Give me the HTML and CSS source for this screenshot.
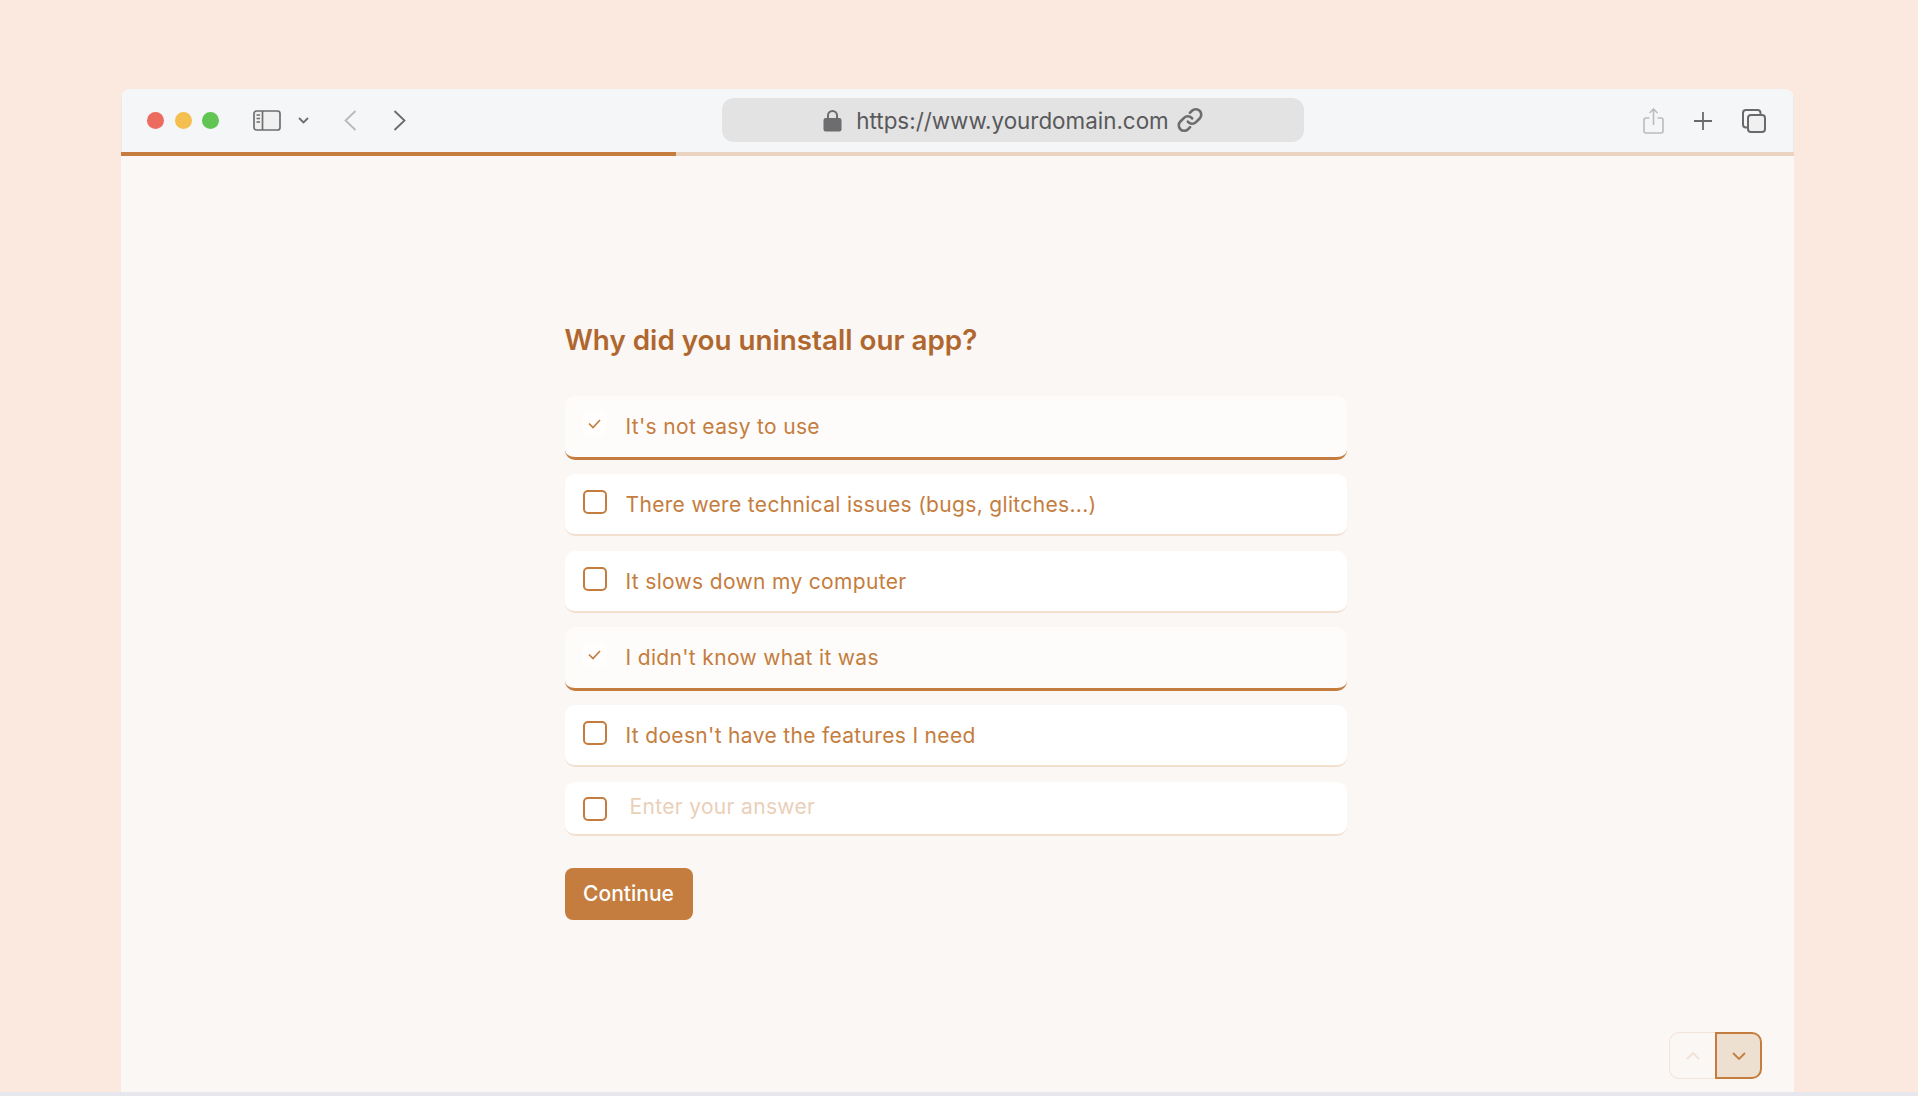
FILE: index.html
```html
<!DOCTYPE html>
<html lang="en">
<head>
<meta charset="utf-8">
<title>Why did you uninstall our app?</title>
<link rel="stylesheet" href="styles.css">
</head>
<body>
<div class="page">
  <div class="window">
    <header class="toolbar">
      <div class="tools-left">
        <div class="dots">
          <span class="dot dot-red"></span><span class="dot dot-yellow"></span><span class="dot dot-green"></span>
        </div>
        <svg class="ic-sidebar" width="28" height="21" viewBox="0 0 28 21" fill="none" stroke="#6e6e70" stroke-width="1.7">
          <rect x="1" y="1" width="26" height="19" rx="2.5" fill="#f0f0f1"/>
          <path d="M9.5 1v19"/>
          <path d="M3.5 5h3.5M3.5 8.5h3.5M3.5 12h3.5" stroke-width="1.4"/>
        </svg>
        <svg class="ic-caret" width="11" height="7" viewBox="0 0 11 7" fill="none" stroke="#6e6e70" stroke-width="1.8"><path d="M1 1l4.5 4.5L10 1"/></svg>
        <svg class="ic-back" width="13" height="21" viewBox="0 0 13 21" fill="none" stroke="#b9b9bb" stroke-width="1.8"><path d="M11.5 1L1.5 10.5l10 9.5"/></svg>
        <svg class="ic-forward" width="13" height="21" viewBox="0 0 13 21" fill="none" stroke="#6a6a6c" stroke-width="1.8"><path d="M1.5 1l10 9.5-10 9.5"/></svg>
      </div>
      <div class="address">
        <svg width="19" height="23" viewBox="0 0 19 23" fill="none"><path d="M5 10V6.5a4.5 4.5 0 0 1 9 0V10" stroke="#6d6d70" stroke-width="2"/><rect x="0.5" y="9" width="18" height="13.5" rx="2.2" fill="#6d6d70"/></svg>
        <span class="url">https://www.yourdomain.com</span>
        <svg class="ic-link" width="26" height="26" viewBox="0 0 24 24" fill="none" stroke="#6d6d70" stroke-width="2.4" stroke-linecap="round" stroke-linejoin="round"><path d="M10 13.5a5 5 0 0 0 7.5.5l3.4-3.4a5 5 0 0 0-7.1-7.1l-1.9 1.9"/><path d="M14 10.5a5 5 0 0 0-7.5-.5l-3.4 3.4a5 5 0 0 0 7.1 7.1l1.9-1.9"/></svg>
      </div>
      <div class="tools-right">
        <svg width="21" height="26" viewBox="0 0 21 26" fill="none" stroke="#bcbcbe" stroke-width="1.6"><path d="M6.5 10H3a2 2 0 0 0-2 2v11a2 2 0 0 0 2 2h15a2 2 0 0 0 2-2V12a2 2 0 0 0-2-2h-3.5"/><path d="M10.5 17V1.5M6.5 5l4-4 4 4"/></svg>
        <svg width="18" height="18" viewBox="0 0 18 18" fill="none" stroke="#6a6a6c" stroke-width="1.8"><path d="M9 0v18M0 9h18"/></svg>
        <svg width="24" height="24" viewBox="0 0 24 24" fill="none" stroke="#6a6a6c" stroke-width="2"><path d="M5 18.5H4a3 3 0 0 1-3-3V4a3 3 0 0 1 3-3h11.5a3 3 0 0 1 3 3v1"/><rect x="6" y="6" width="17" height="17" rx="3" fill="#f0f0f1"/></svg>
      </div>
    </header>
    <div class="progress"><div class="progress-fill"></div></div>
    <main class="content">
      <section class="form">
        <h1 class="question">Why did you uninstall our app?</h1>
        <div class="options">
          <div class="option selected"><span class="box"><svg width="13" height="10" viewBox="0 0 13 10" fill="none" stroke="#c47d3e" stroke-width="1.7"><path d="M1 4.5l4 4L12 1"/></svg></span><span class="label">It's not easy to use</span></div>
          <div class="option"><span class="box"></span><span class="label">There were technical issues (bugs, glitches...)</span></div>
          <div class="option"><span class="box"></span><span class="label">It slows down my computer</span></div>
          <div class="option selected"><span class="box"><svg width="13" height="10" viewBox="0 0 13 10" fill="none" stroke="#c47d3e" stroke-width="1.7"><path d="M1 4.5l4 4L12 1"/></svg></span><span class="label">I didn't know what it was</span></div>
          <div class="option"><span class="box"></span><span class="label">It doesn't have the features I need</span></div>
          <div class="option other"><span class="box"></span><span class="label placeholder">Enter your answer</span></div>
        </div>
        <button class="continue" type="button">Continue</button>
      </section>
      <div class="nav">
        <span class="nav-btn nav-up"><svg width="14" height="8" viewBox="0 0 14 8" fill="none" stroke="#efe2d6" stroke-width="1.8"><path d="M1 7l6-6 6 6"/></svg></span>
        <span class="nav-btn nav-down"><svg width="14" height="8" viewBox="0 0 14 8" fill="none" stroke="#c47d3e" stroke-width="1.8"><path d="M1 1l6 6 6-6"/></svg></span>
      </div>
    </main>
  </div>
  <div class="strip"></div>
</div>
</body>
</html>
```
FILE: styles.css
```css
* { box-sizing: border-box; }
html, body { margin: 0; height: 100%; overflow: hidden; }
body { font-family: Inter, "Liberation Sans", sans-serif; background: #fbe9e0; }

.page { height: 1096px; display: flex; flex-direction: column; padding-top: 89px; }
.window {
  flex: 1;
  margin: 0 124px 0 121px;
  display: flex;
  flex-direction: column;
  border-radius: 9px 9px 0 0;
  overflow: hidden;
  background: #fbf7f4;
}
.strip { height: 4px; background: #e6e8ee; }

.toolbar {
  height: 63px;
  flex: none;
  display: flex;
  align-items: center;
  background: #f5f6f8;
  box-shadow: inset 1px 0 0 #e9e9eb, inset -1px 0 0 #e9e9eb;
}
.tools-left { flex: none; width: 601px; padding-left: 26px; display: flex; align-items: center; }
.dots { display: flex; gap: 10.5px; }
.dot { width: 17px; height: 17px; border-radius: 50%; }
.dot-red { background: #ed6a5e; }
.dot-yellow { background: #f4bf4f; }
.dot-green { background: #61c554; }
.ic-sidebar { margin-left: 34px; }
.ic-caret { margin-left: 17px; }
.ic-back { margin-left: 35px; }
.ic-forward { margin-left: 36px; }

.address {
  flex: none;
  width: 582px;
  height: 44px;
  margin-top: -1px;
  display: flex;
  align-items: center;
  justify-content: center;
  gap: 14px;
  border-radius: 12px;
  background: #e3e3e3;
}
.url { font-size: 22.4px; color: #59595b; font-weight: 400; }
.ic-link { margin-left: -6px; }

.tools-right { flex: 1; display: flex; align-items: center; padding-left: 339px; gap: 30.2px; }

.progress { height: 4px; background: #ead3bf; flex: none; }
.progress-fill { height: 100%; width: 555px; background: #c47d3e; }

.content { flex: 1; position: relative; padding: 164px 0 0 443.5px; }
.form { width: 782.5px; }
.question { margin: 0 0 36px; font-size: 27.8px; line-height: 40px; font-weight: 600; color: #b0672f; }

.options { display: flex; flex-direction: column; gap: 14.5px; }
.option {
  height: 62px;
  display: flex;
  align-items: center;
  gap: 19px;
  padding: 0 18px;
  background: #fff;
  border-radius: 10px;
  border-bottom: 2px solid #f3dfce;
}
.option.selected { background: #fefcfa; border-bottom: 3px solid #c47d3e; height: 63.5px; }
.option.other { height: 54px; align-items: flex-start; padding-top: 15px; }
.box {
  flex: none;
  width: 24px;
  height: 24px;
  margin-top: -4px;
  border: 2.5px solid #c47d3e;
  border-radius: 5px;
  display: flex;
  align-items: center;
  justify-content: center;
}
.selected .box { border: 0; background: #fffefd; }
.other .box { margin-top: 0; }
.label { font-size: 21px; color: #c47d3e; letter-spacing: 0.33px; margin-top: 1px; }
.placeholder { color: #eacfb9; margin-left: 4px; margin-top: -3px; }

.continue {
  display: block;
  width: 128px;
  height: 52px;
  margin-top: 32px;
  padding: 0;
  border: 0;
  border-radius: 8px;
  background: #c47d3e;
  color: #fff;
  font: 500 21px Inter, "Liberation Sans", sans-serif;
}

.nav { position: absolute; right: 32px; bottom: 13px; display: flex; }
.nav-btn { width: 46px; height: 47px; display: flex; align-items: center; justify-content: center; }
.nav-up { border: 1.5px solid #f3e4d8; border-right: 0; border-radius: 10px 0 0 10px; }
.nav-down { width: 47px; border: 2px solid #c47d3e; border-radius: 0 10px 10px 0; background: #eee0d0; }
```
